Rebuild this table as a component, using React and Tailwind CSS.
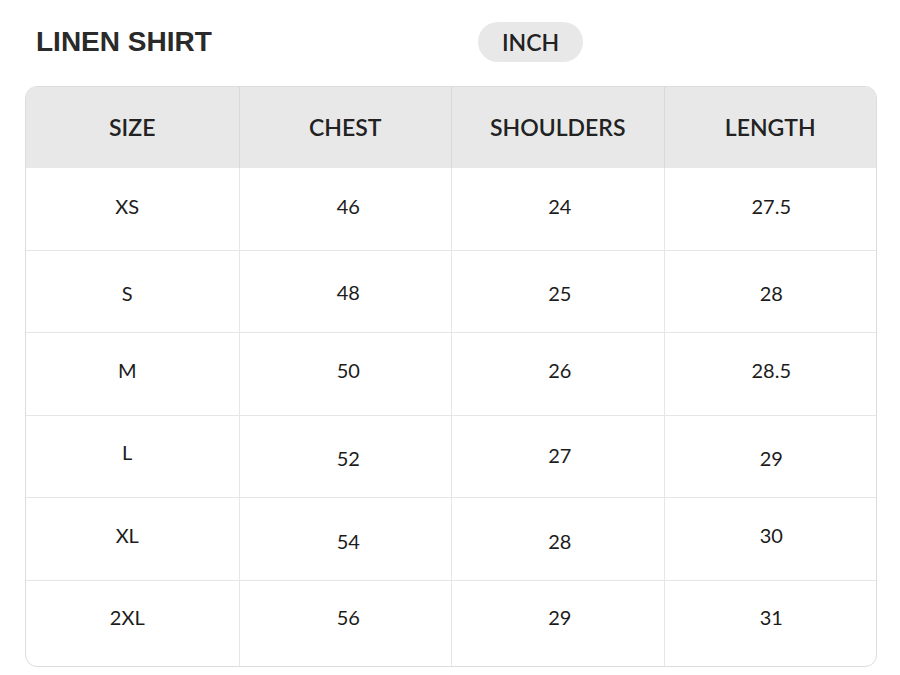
const headers = ["SIZE", "CHEST", "SHOULDERS", "LENGTH"];

// value + small vertical nudge, as in the original chart
const rows = [
  [["XS", "pb-[5px]"], ["46", "pb-[5px]"], ["24", "pb-[5px]"], ["27.5", "pb-[5px]"]],
  [["S", "pt-[4px]"], ["48", "pt-[2px]"], ["25", "pt-[4px]"], ["28", "pt-[4px]"]],
  [["M", "pb-[7px]"], ["50", "pb-[7px]"], ["26", "pb-[7px]"], ["28.5", "pb-[7px]"]],
  [["L", "pb-[8px]"], ["52", "pt-[4px]"], ["27", "pb-[2px]"], ["29", "pt-[4px]"]],
  [["XL", "pb-[7px]"], ["54", "pt-[5px]"], ["28", "pt-[5px]"], ["30", "pb-[7px]"]],
  [["2XL", "pb-[12px]"], ["56", "pb-[12px]"], ["29", "pb-[12px]"], ["31", "pb-[12px]"]],
];

const colShift = ["pr-[10px]", "pl-[6px]", "pl-[4px]", "pl-[2px]"];

export default function App() {
  return (
    <div className="w-[900px] h-[675px] bg-white px-[25px] pt-[22px] font-['Lato',sans-serif]">
      {/* Title + unit */}
      <div className="flex items-center h-[40px]">
        <div className="w-[453px] pl-[11px]">
          <h1 className="font-['Liberation_Sans',Arial,sans-serif] font-bold text-[28px] leading-none text-[#2a2a2a]">
            LINEN SHIRT
          </h1>
        </div>
        <div className="h-[40px] w-[105px] rounded-full bg-[#e8e8e8] flex items-center justify-center text-[23px] font-semibold text-[#222]">
          INCH
        </div>
      </div>

      {/* Table */}
      <div className="mt-[24px] w-[852px] rounded-[12px] border border-[#dcdcdc] overflow-hidden">
        <div className="grid grid-cols-4 h-[81px] bg-[#e8e8e8]">
          {headers.map((h, i) => (
            <div
              key={h}
              className={
                "flex items-center justify-center text-[23px] font-semibold text-[#222] " +
                (i > 0 ? "border-l border-[#d9d9d9]" : "")
              }
            >
              {h}
            </div>
          ))}
        </div>
        {rows.map((row, r) => (
          <div
            key={r}
            className={
              "grid grid-cols-4 " +
              (r < rows.length - 1 ? "h-[82.5px] border-b border-[#e6e6e6]" : "h-[85.5px]")
            }
          >
            {row.map(([v, nudge], c) => (
              <div
                key={c}
                className={
                  "flex items-center justify-center text-[20px] text-[#1c1c1c] " +
                  nudge +
                  " " +
                  colShift[c] +
                  (c > 0 ? " border-l border-[#e6e6e6]" : "")
                }
              >
                {v}
              </div>
            ))}
          </div>
        ))}
      </div>
    </div>
  );
}
